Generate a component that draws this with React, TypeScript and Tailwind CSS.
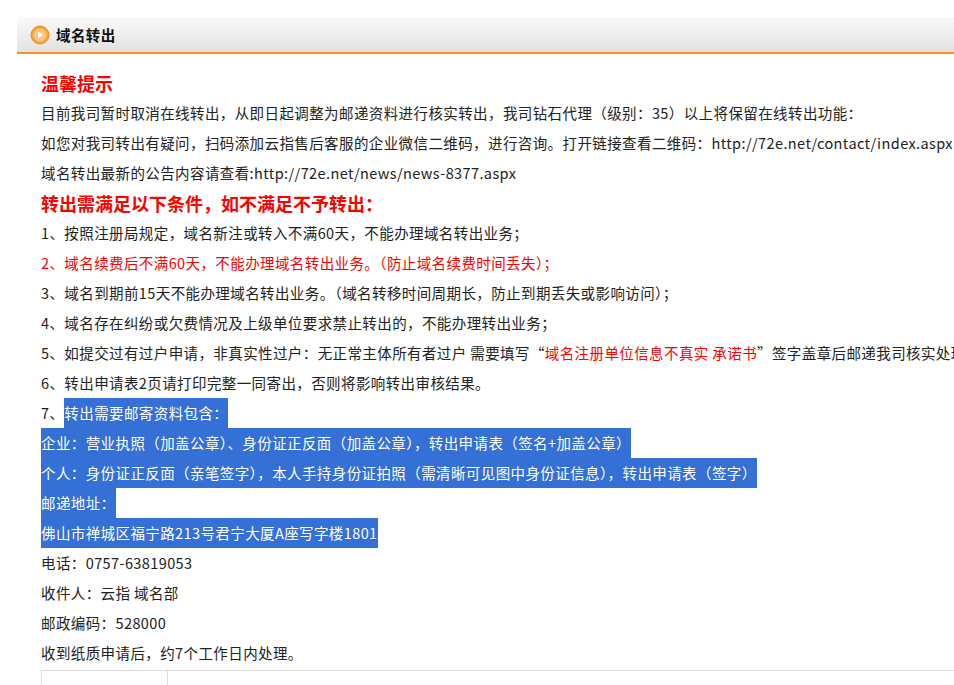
export default function App() {
  const f = { fontFamily: '"Noto Sans CJK SC","Microsoft YaHei",sans-serif' };
  const hl = "bg-[#3470d6] text-white";
  const Row = ({ children, c = "" }: { children: React.ReactNode; c?: string }) => (
    <div className={`h-[30px] leading-[30px] whitespace-nowrap ${c}`}>{children}</div>
  );
  return (
    <div className="w-[954px] h-[685px] overflow-hidden bg-white text-[14.5px] tracking-[0.4px] text-[#222]" style={f}>
      <div className="h-[17px]" />
      <div className="ml-[17px] h-[37px] flex items-center gap-[6px] pl-[13px] border-b-2 border-[#f7931e] bg-gradient-to-b from-[#fafafa] to-[#e2e2e2]">
        <svg width="20" height="20" viewBox="0 0 20 20">
          <circle cx="10" cy="10" r="9" fill="#f7a43d" stroke="#f08a1d" />
          <circle cx="10" cy="10" r="6.5" fill="#fbc680" />
          <path d="M8 6.5 L13 10 L8 13.5Z" fill="#fff" />
        </svg>
        <span className="font-bold text-[14.5px] text-[#111]">域名转出</span>
      </div>
      <div className="ml-[41px] overflow-hidden">
        <div className="h-[30px] mt-[14px] leading-[30px] text-[18px] tracking-normal font-bold text-[#f00]">温馨提示</div>
        <Row>目前我司暂时取消在线转出，从即日起调整为邮递资料进行核实转出，我司钻石代理（级别：35）以上将保留在线转出功能：</Row>
        <Row>如您对我司转出有疑问，扫码添加云指售后客服的企业微信二维码，进行咨询。打开链接查看二维码：http://72e.net/contact/index.aspx</Row>
        <Row>域名转出最新的公告内容请查看:http://72e.net/news/news-8377.aspx</Row>
        <div className="h-[30px] leading-[30px] text-[18px] tracking-normal font-bold text-[#f00]">转出需满足以下条件，如不满足不予转出：</div>
        <Row>1、按照注册局规定，域名新注或转入不满60天，不能办理域名转出业务；</Row>
        <Row c="text-[#f00]">2、域名续费后不满60天，不能办理域名转出业务。（防止域名续费时间丢失）；</Row>
        <Row>3、域名到期前15天不能办理域名转出业务。（域名转移时间周期长，防止到期丢失或影响访问）；</Row>
        <Row>4、域名存在纠纷或欠费情况及上级单位要求禁止转出的，不能办理转出业务；</Row>
        <Row>5、如提交过有过户申请，非真实性过户：无正常主体所有者过户 需要填写“<span className="text-[#f00]">域名注册单位信息不真实 承诺书</span>”签字盖章后邮递我司核实处理</Row>
        <Row>6、转出申请表2页请打印完整一同寄出，否则将影响转出审核结果。</Row>
        <Row>7、<span className={`${hl} inline-block h-[30px]`}>转出需要邮寄资料包含：</span></Row>
        <Row><span className={`${hl} inline-block h-[30px]`}>企业：营业执照（加盖公章）、身份证正反面（加盖公章），转出申请表（签名+加盖公章）</span></Row>
        <Row><span className={`${hl} inline-block h-[30px]`}>个人：身份证正反面（亲笔签字），本人手持身份证拍照（需清晰可见图中身份证信息），转出申请表（签字）</span></Row>
        <Row><span className={`${hl} inline-block h-[30px]`}>邮递地址：</span></Row>
        <Row><span className={`${hl} inline-block h-[30px]`}>佛山市禅城区福宁路213号君宁大厦A座写字楼1801</span></Row>
        <Row>电话：0757-63819053</Row>
        <Row>收件人：云指 域名部</Row>
        <Row>邮政编码：528000</Row>
        <Row>收到纸质申请后，约7个工作日内处理。</Row>
        <div className="flex h-[30px] border-t border-l border-[#ddd] mt-[2px]">
          <div className="w-[126px] border-r border-[#ddd]" />
          <div className="flex-1" />
        </div>
      </div>
    </div>
  );
}
